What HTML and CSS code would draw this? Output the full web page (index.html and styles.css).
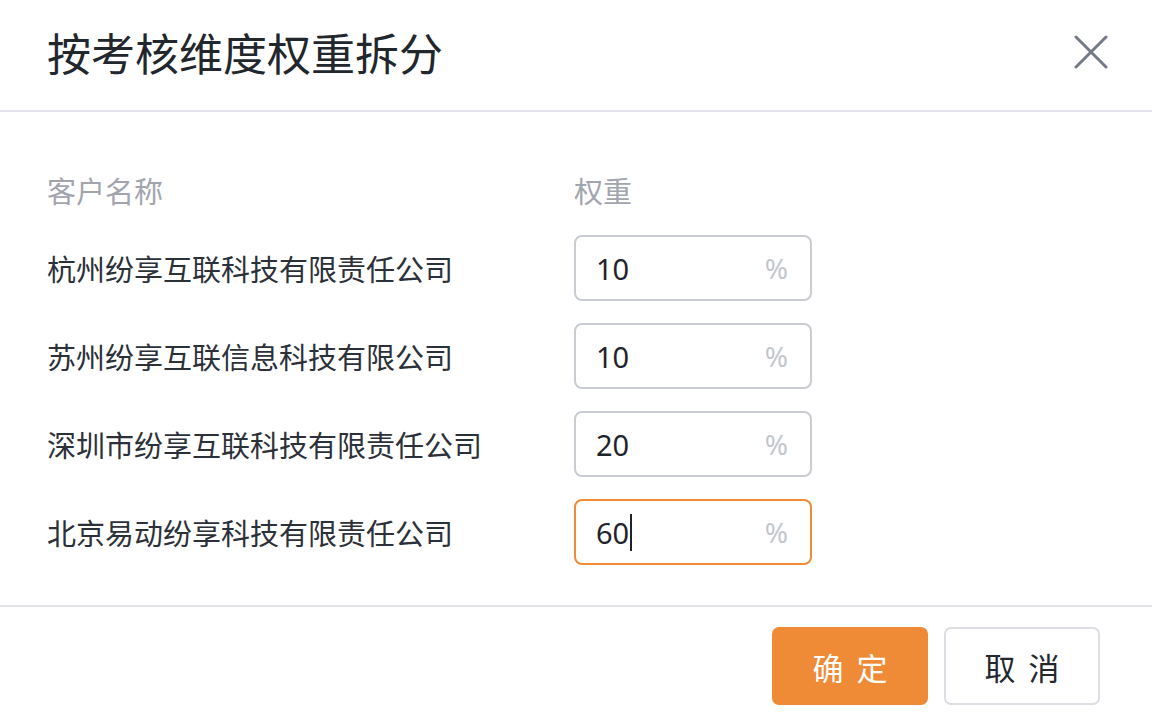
FILE: index.html
```html
<!DOCTYPE html>
<html lang="zh-CN">
<head>
<meta charset="utf-8">
<title>按考核维度权重拆分</title>
<link rel="stylesheet" href="styles.css">
</head>
<body>
<div class="dialog">
  <div class="dialog-header">
    <h1 class="dialog-title">按考核维度权重拆分</h1>
    <button class="close-btn" aria-label="关闭">
      <svg width="34" height="34" viewBox="0 0 34 34"><path d="M2 2 L32 32 M32 2 L2 32" stroke="#737987" stroke-width="3" stroke-linecap="round" fill="none"/></svg>
    </button>
  </div>
  <div class="dialog-body">
    <div class="grid">
      <div class="col-label">客户名称</div>
      <div class="col-label">权重</div>

      <div class="name">杭州纷享互联科技有限责任公司</div>
      <div class="field"><span class="value">10</span><span class="unit">%</span></div>

      <div class="name">苏州纷享互联信息科技有限公司</div>
      <div class="field"><span class="value">10</span><span class="unit">%</span></div>

      <div class="name">深圳市纷享互联科技有限责任公司</div>
      <div class="field"><span class="value">20</span><span class="unit">%</span></div>

      <div class="name">北京易动纷享科技有限责任公司</div>
      <div class="field focused"><span class="value">60<span class="caret"></span></span><span class="unit">%</span></div>
    </div>
  </div>
  <div class="dialog-footer">
    <button class="btn btn-primary">确 定</button>
    <button class="btn btn-default">取 消</button>
  </div>
</div>
</body>
</html>
```
FILE: styles.css
```css
* { box-sizing: border-box; }
html, body { margin: 0; padding: 0; background: #fff; }
body {
  font-family: "Noto Sans", "Noto Sans CJK SC", sans-serif;
  color: #2a2e35;
}
.dialog { width: 1152px; }
.dialog-header {
  height: 112px;
  display: flex;
  align-items: center;
  justify-content: space-between;
  padding: 0 44px 6px 47px;
  border-bottom: 2px solid #e3e4e9;
}
.dialog-title {
  margin: 0;
  font-size: 44px;
  font-weight: 400;
  color: #22262d;
  line-height: 56px;
  font-family: "Noto Sans CJK SC", sans-serif;
}
.close-btn {
  border: 0;
  background: transparent;
  padding: 0;
  width: 34px;
  height: 34px;
  display: flex;
  align-items: center;
  justify-content: center;
}
.dialog-body {
  padding: 58px 48px 40px 47px;
  border-bottom: 2px solid #e3e4e9;
}
.grid {
  display: grid;
  grid-template-columns: 527px 238px;
  row-gap: 22px;
  align-items: center;
}
.col-label {
  font-family: "Noto Sans CJK SC", sans-serif;
  font-size: 29px;
  line-height: 40px;
  color: #a2a5ad;
  margin-bottom: 3px;
}
.name {
  font-family: "Noto Sans CJK SC", sans-serif;
  font-size: 29px;
  line-height: 40px;
  color: #2c3038;
}
.field {
  height: 66px;
  border: 2px solid #c9ccd3;
  border-radius: 8px;
  display: flex;
  align-items: center;
  justify-content: space-between;
  padding: 0 22px 0 20px;
}
.field.focused { border-color: #f28b35; }
.value {
  font-family: "Noto Sans", sans-serif;
  font-size: 29px;
  color: #1f232a;
  display: flex;
  align-items: center;
}
.caret {
  display: inline-block;
  width: 2px;
  height: 37px;
  background: #1f232a;
  margin-left: 1px;
}
.unit {
  font-family: "Noto Sans", sans-serif;
  font-size: 28px;
  color: #c3c6cd;
}
.dialog-footer {
  display: flex;
  justify-content: flex-end;
  gap: 16px;
  padding: 20px 52px 0 0;
}
.btn {
  width: 156px;
  height: 78px;
  border-radius: 7px;
  font-family: "Noto Sans CJK SC", sans-serif;
  font-size: 31px;
  letter-spacing: 3px;
  text-indent: 3px;
  padding: 0;
}
.btn-primary {
  background: #ef8a36;
  border: 2px solid #ef8a36;
  color: #fff;
}
.btn-default {
  background: #fff;
  border: 2px solid #dcdee4;
  color: #23272e;
}
```
